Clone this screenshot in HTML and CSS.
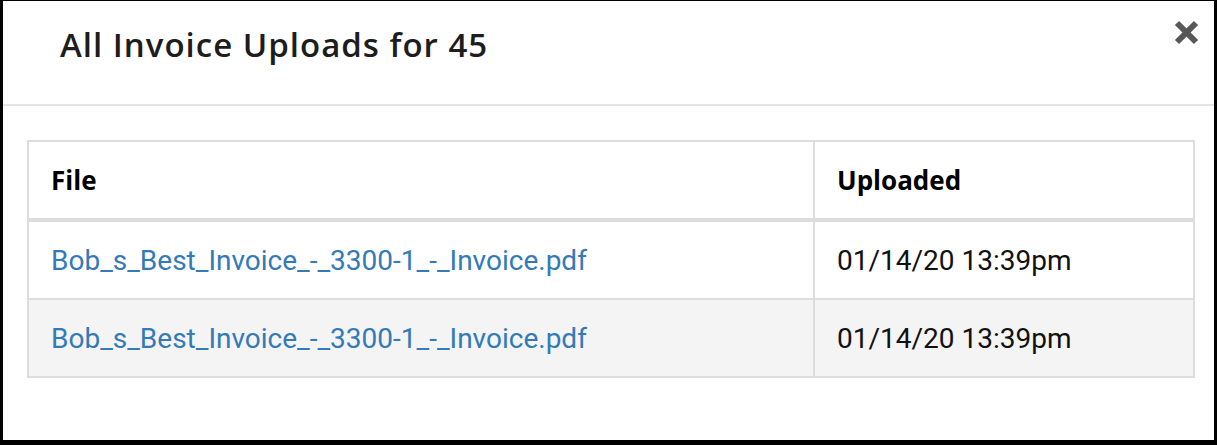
FILE: index.html
```html
<!DOCTYPE html>
<html>

<head>
    <meta name="viewport" content="width=device-width, initial-scale=1">
    <title>All Invoice Uploads</title>
    <link rel="stylesheet" href="styles.css">
</head>

<body>
    <div class="modal">
        <div class="modal-header">
            <h2 class="modal-title">All Invoice Uploads for 45</h2>
            <a class="close" href="#" title="Close">
                <svg width="27" height="26" viewBox="0 0 27 26">
                    <path d="M4 3 L23 22 M23 3 L4 22" stroke="#575757" stroke-width="6" fill="none"/>
                </svg>
            </a>
        </div>

        <div class="modal-body">
            <table class="uploads">
                <thead>
                    <tr>
                        <th class="col-file">File</th>
                        <th class="col-date">Uploaded</th>
                    </tr>
                </thead>
                <tbody>
                    <tr>
                        <td><a href="#">Bob_s_Best_Invoice_-_3300-1_-_Invoice.pdf</a></td>
                        <td>01/14/20 13:39pm</td>
                    </tr>
                    <tr class="striped">
                        <td><a href="#">Bob_s_Best_Invoice_-_3300-1_-_Invoice.pdf</a></td>
                        <td>01/14/20 13:39pm</td>
                    </tr>
                </tbody>
            </table>
        </div>
    </div>
</body>

</html>
```

FILE: styles.css
```css
body {
    margin: 0;
    padding: 1px 3px 5px 3px;
    background-color: #000;
    font-family: Roboto, "Liberation Sans", sans-serif;
}

.modal {
    height: 439px;
    background-color: #fff;
}

.modal-header {
    display: flex;
    justify-content: space-between;
    align-items: flex-start;
    height: 105px;
    box-sizing: border-box;
    padding: 19px 14px 0 57px;
    border-bottom: 2px solid #e5e5e5;
}

.modal-title {
    margin: 9px 0 0 0;
    font-family: "Open Sans", sans-serif;
    font-size: 33px;
    font-weight: 600;
    line-height: 32px;
    letter-spacing: 1px;
    color: #1d1d1d;
}

.close svg {
    display: block;
}

.modal-body {
    padding: 34px 19px 0 24px;
}

.uploads {
    width: 100%;
    border-collapse: collapse;
    table-layout: fixed;
}

.uploads th,
.uploads td {
    border: 2px solid #ddd;
    height: 76px;
    padding: 0 0 0 22px;
    text-align: left;
    vertical-align: middle;
}

.uploads th {
    border-bottom-width: 4px;
    font-family: "Open Sans", sans-serif;
    font-size: 26px;
    font-weight: 700;
    color: #000;
}

.uploads td {
    font-size: 28px;
    color: #111;
}

.col-file {
    width: 762px;
}

.uploads td a {
    color: #337ab7;
    text-decoration: none;
}

.uploads tr.striped td {
    background-color: #f4f4f4;
}
```
